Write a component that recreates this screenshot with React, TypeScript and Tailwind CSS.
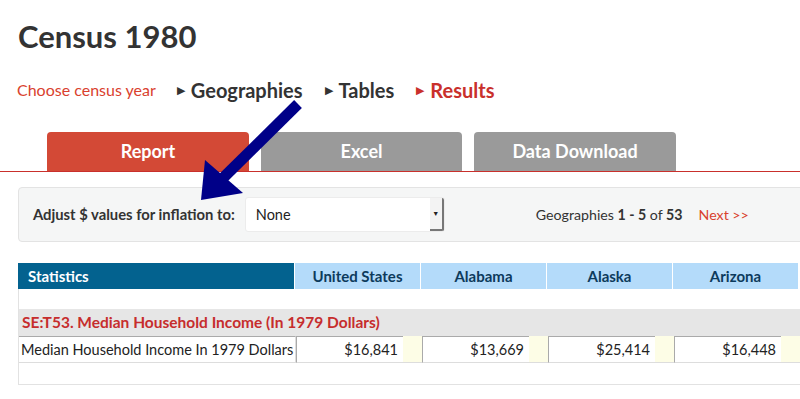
import React from "react";

const geos = [
  { name: "United States", value: "$16,841" },
  { name: "Alabama", value: "$13,669" },
  { name: "Alaska", value: "$25,414" },
  { name: "Arizona", value: "$16,448" },
];

const Triangle = ({ red }: { red?: boolean }) => (
  <span className={`mr-[6px] text-[11px] ${red ? "text-[#c9302c]" : "text-[#333]"}`}>▶</span>
);

export default function App() {
  return (
    <div className="relative w-[800px] h-[399px] overflow-hidden bg-white font-['Lato',sans-serif] text-[#333]">
      <div className="w-[1000px]">
        <h1 className="mt-[16px] pl-[18px] text-[31px] leading-[40px] font-bold text-[#333]">Census 1980</h1>

        {/* breadcrumb steps */}
        <div className="mt-[22px] pl-[17px] h-[24px] flex items-center">
          <a className="text-[16px] text-[#d9412e] mr-[21px]">Choose census year</a>
          <span className="flex items-center mr-[22px]">
            <Triangle />
            <span className="text-[20px] font-bold">Geographies</span>
          </span>
          <span className="flex items-center mr-[22px]">
            <Triangle />
            <span className="text-[20px] font-bold">Tables</span>
          </span>
          <span className="flex items-center">
            <Triangle red />
            <span className="text-[20px] font-bold text-[#c9302c]">Results</span>
          </span>
        </div>

        {/* tabs */}
        <div className="mt-[30px] pl-[47px] flex gap-[12px] border-b border-[#c9302c]">
          <div className="w-[202px] h-[39px] rounded-t-[4px] bg-[#d34936] flex items-center justify-center text-white text-[18px] font-bold">
            Report
          </div>
          <div className="w-[201px] h-[39px] rounded-t-[4px] bg-[#9a9a9a] flex items-center justify-center text-white text-[18px] font-bold">
            Excel
          </div>
          <div className="w-[202px] h-[39px] rounded-t-[4px] bg-[#9a9a9a] flex items-center justify-center text-white text-[18px] font-bold">
            Data Download
          </div>
        </div>

        {/* options panel */}
        <div className="mt-[15px] ml-[18px] h-[55px] rounded-[4px] border border-[#e3e3e3] bg-[#f5f6f6] flex items-center pl-[14px]">
          <span className="text-[14.8px] font-bold text-[#333]">Adjust $ values for inflation to:</span>
          <div className="ml-[10px] w-[200px] h-[35px] bg-white rounded-[3px] border border-[#ececec] flex items-center">
            <span className="flex-1 pl-[10px] text-[14.5px] text-[#222]">None</span>
            <div className="w-[14px] h-[33px] bg-[#f3f3f3] border-r-2 border-b-2 border-[#777] rounded-r-[2px] flex items-center justify-center text-[7px] text-[#222]">
              ▼
            </div>
          </div>
          <span className="ml-[91px] text-[14.2px] text-[#333]">
            Geographies <b>1 - 5</b> of <b>53</b>
          </span>
          <a className="ml-[16px] text-[14.2px] text-[#d9412e]">Next &gt;&gt;</a>
        </div>

        {/* results table */}
        <div className="mt-[21px] ml-[18px]">
          <div className="flex h-[26px] text-[15px] font-bold">
            <div className="w-[276px] bg-[#03628f] text-white pl-[10px] flex items-center">Statistics</div>
            {geos.map((g) => (
              <div key={g.name} className="ml-px w-[125px] bg-[#b4dbfa] text-[#0d3a5c] flex items-center justify-center">
                {g.name}
              </div>
            ))}
          </div>
          <div className="border-l border-b border-[#e2e2e2]">
            <div className="h-[20px]" />
            <div className="h-[27px] bg-[#e6e6e6] flex items-center pl-[3px] text-[15.5px] font-bold text-[#c62d2d]">
              SE:T53. Median Household Income (In 1979 Dollars)
            </div>
            <div className="flex h-[27px] text-[14.5px] text-[#222]">
              <div className="w-[277px] border-t border-[#aaa] border-b border-b-[#ddd] border-r border-r-[#ddd] pl-[2px] flex items-center">
                Median Household Income In 1979 Dollars
              </div>
              {geos.map((g) => (
                <div key={g.name} className="flex w-[126px]">
                  <div className="w-[107px] border-t border-l border-[#aaa] border-b border-b-[#ddd] flex items-center justify-end pr-[5px]">
                    {g.value}
                  </div>
                  <div className="w-[19px] bg-[#fdfde6] border-b border-[#ddd]" />
                </div>
              ))}
            </div>
            <div className="h-[21px]" />
          </div>
        </div>
      </div>

      {/* annotation arrow */}
      <svg className="absolute left-0 top-0 pointer-events-none" width="800" height="399">
        <line x1="298" y1="104" x2="222" y2="179" stroke="#000088" strokeWidth="11" />
        <polygon points="201,200 205,160 243,193" fill="#000088" />
      </svg>
    </div>
  );
}
